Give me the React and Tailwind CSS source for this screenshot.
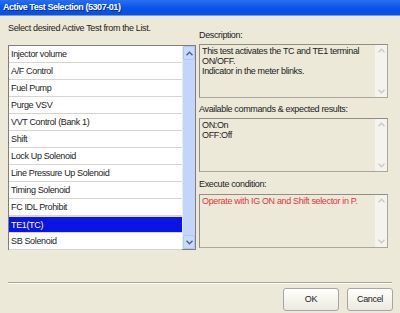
import React from 'react';

const tests = [
    'Injector volume',
    'A/F Control',
    'Fuel Pump',
    'Purge VSV',
    'VVT Control (Bank 1)',
    'Shift',
    'Lock Up Solenoid',
    'Line Pressure Up Solenoid',
    'Timing Solenoid',
    'FC IDL Prohibit',
    'TE1(TC)',
    'SB Solenoid',
];

const Chevron = ({ up, className }) => (
    <svg width="7" height="5" viewBox="0 0 7 5" className={className}>
        <path d={up ? 'M0.5 4.2 L3.5 1.2 L6.5 4.2' : 'M0.5 0.8 L3.5 3.8 L6.5 0.8'} fill="none" stroke="currentColor" strokeWidth="1.4" />
    </svg>
);

// pale, disabled scrollbar inside the read-only boxes
const PaleScroll = () => (
    <div className="w-[12px] bg-[#f4f3ee] flex flex-col justify-between items-center py-[3px] text-[#cbcac2]">
        <Chevron up />
        <Chevron />
    </div>
);

const InfoBox = ({ children, red }) => (
    <div className="h-[54px] flex border border-[#a9a79c] border-t-[#8f8d84] border-l-[#8f8d84] bg-[#ece9d8]">
        <div className={`flex-1 px-[2px] pt-[1px] leading-[10px] ${red ? 'text-[#e2343f]' : 'text-[#222]'}`}>
            {children}
        </div>
        <PaleScroll />
    </div>
);

const App = () => {
    return (
        <div className="w-[400px] h-[313px] overflow-hidden bg-[#ece9d8] flex flex-col text-[9px] tracking-[-0.35px] text-[#222] font-['Liberation_Sans',Arial,sans-serif]">
            {/* title bar */}
            <div className="h-[15px] bg-gradient-to-b from-[#2a6ff0] via-[#0656ea] to-[#0a50dc] flex items-center px-[3px] text-white font-bold text-[9px] tracking-[-0.45px] [text-shadow:1px_1px_0_#0a2a8a]">
                Active Test Selection (5307-01)
            </div>
            <div className="h-[1px] bg-[#6d9cf5]" />

            <div className="flex gap-[3px] px-[8px] pt-[5px]">
                {/* left column */}
                <div className="w-[188px] flex flex-col">
                    <p className="h-[14px] leading-[14px]">Select desired Active Test from the List.</p>
                    <div className="mt-[10px] h-[205px] flex border border-[#7f7e78] bg-white">
                        <ul className="flex-1 flex flex-col">
                            {tests.map((t) => (
                                <li
                                    key={t}
                                    className={`h-[17px] leading-[16px] pl-[2px] border-b border-[#d6d4cc] ${t === 'TE1(TC)' ? 'bg-[#0a14e6] text-white border-t border-t-[#e6dd9a]' : ''}`}
                                >
                                    {t}
                                </li>
                            ))}
                        </ul>
                        <div className="w-[13px] bg-[#c3d5fc] border-l border-[#e4ecfd] flex flex-col justify-between">
                            <div className="h-[14px] bg-[#c9d9fd] rounded-[2px] border border-[#b0c6f6] flex items-center justify-center text-[#4d6185]">
                                <Chevron up />
                            </div>
                            <div className="h-[14px] bg-[#c9d9fd] rounded-[2px] border border-[#b0c6f6] flex items-center justify-center text-[#4d6185]">
                                <Chevron />
                            </div>
                        </div>
                    </div>
                </div>

                {/* right column */}
                <div className="w-[189px] flex flex-col">
                    <p className="mt-[7px] h-[14px] leading-[14px]">Description:</p>
                    <div className="mt-[2px]">
                        <InfoBox>
                            This test activates the TC and TE1 terminal
                            <br />
                            ON/OFF.
                            <br />
                            Indicator in the meter blinks.
                        </InfoBox>
                    </div>
                    <p className="mt-[4px] h-[14px] leading-[14px]">Available commands &amp; expected results:</p>
                    <div className="mt-[2px]">
                        <InfoBox>
                            ON:On
                            <br />
                            OFF:Off
                        </InfoBox>
                    </div>
                    <p className="mt-[5px] h-[14px] leading-[14px]">Execute condition:</p>
                    <div className="mt-[3px]">
                        <InfoBox red>Operate with IG ON and Shift selector in P.</InfoBox>
                    </div>
                </div>
            </div>

            {/* separator + buttons */}
            <div className="mx-[8px] mt-[32px] h-[2px] border-t border-[#aca899] border-b border-b-white" />
            <div className="flex justify-end gap-[8px] pr-[7px] mt-[4px]">
                <button className="w-[56px] h-[23px] rounded-[3px] border border-[#a8a69c] bg-gradient-to-b from-white to-[#ece9df] text-[#222]">
                    OK
                </button>
                <button className="w-[46px] h-[23px] rounded-[3px] border border-[#a8a69c] bg-gradient-to-b from-white to-[#ece9df] text-[#222]">
                    Cancel
                </button>
            </div>
        </div>
    );
};

export default App;
